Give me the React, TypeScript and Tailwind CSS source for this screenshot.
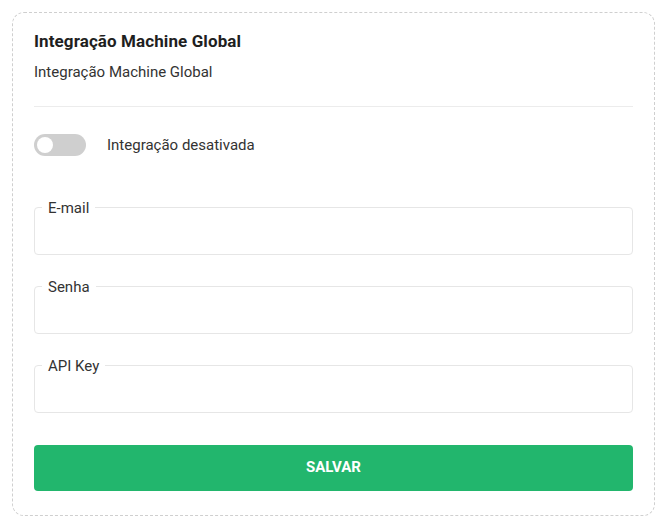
import { useState } from 'react'

function Field({ label, type = 'text' }: { label: string; type?: string }) {
  return (
    <fieldset className="rounded border border-[#e6e6e6] px-[7px]">
      <legend className="px-[6px] text-[15px] leading-4 text-[#333333]">{label}</legend>
      <input type={type} className="block h-[38px] w-full bg-transparent text-sm outline-none" />
    </fieldset>
  )
}

export default function App() {
  const [enabled, setEnabled] = useState(false)

  return (
    <div className="min-h-screen bg-white p-3 font-['Roboto',sans-serif] text-[#222222]">
      <div className="rounded-xl border border-dashed border-[#cfcfcf] px-[21px] pt-[18px] pb-[24px]">
        <h2 className="text-[17px] leading-5 font-bold tracking-[0.1px] text-[#1f1f1f]">Integração Machine Global</h2>
        <p className="mt-[13px] text-[15px] leading-[17px] text-[#333333]">Integração Machine Global</p>
        <hr className="mt-[25px] border-[#ececec]" />

        <div className="mt-[27px] flex items-center gap-[21px]">
          <button
            type="button"
            onClick={() => setEnabled(!enabled)}
            className={`flex h-[22px] w-[52px] items-center rounded-full p-[3px] ${enabled ? 'justify-end bg-[#22b66d]' : 'justify-start bg-[#cfcfcf]'}`}
            aria-label="Alternar integração"
          >
            <span className="h-4 w-4 rounded-full bg-white" />
          </button>
          <span className="text-[15px] text-[#333333]">
            {enabled ? 'Integração ativada' : 'Integração desativada'}
          </span>
        </div>

        <div className="mt-[43px] flex flex-col gap-6">
          <Field label="E-mail" type="email" />
          <Field label="Senha" type="password" />
          <Field label="API Key" />
        </div>

        <button
          type="button"
          className="mt-[32px] h-[46px] w-full rounded bg-[#22b66d] text-[15px] font-bold text-white"
        >
          SALVAR
        </button>
      </div>
    </div>
  )
}
